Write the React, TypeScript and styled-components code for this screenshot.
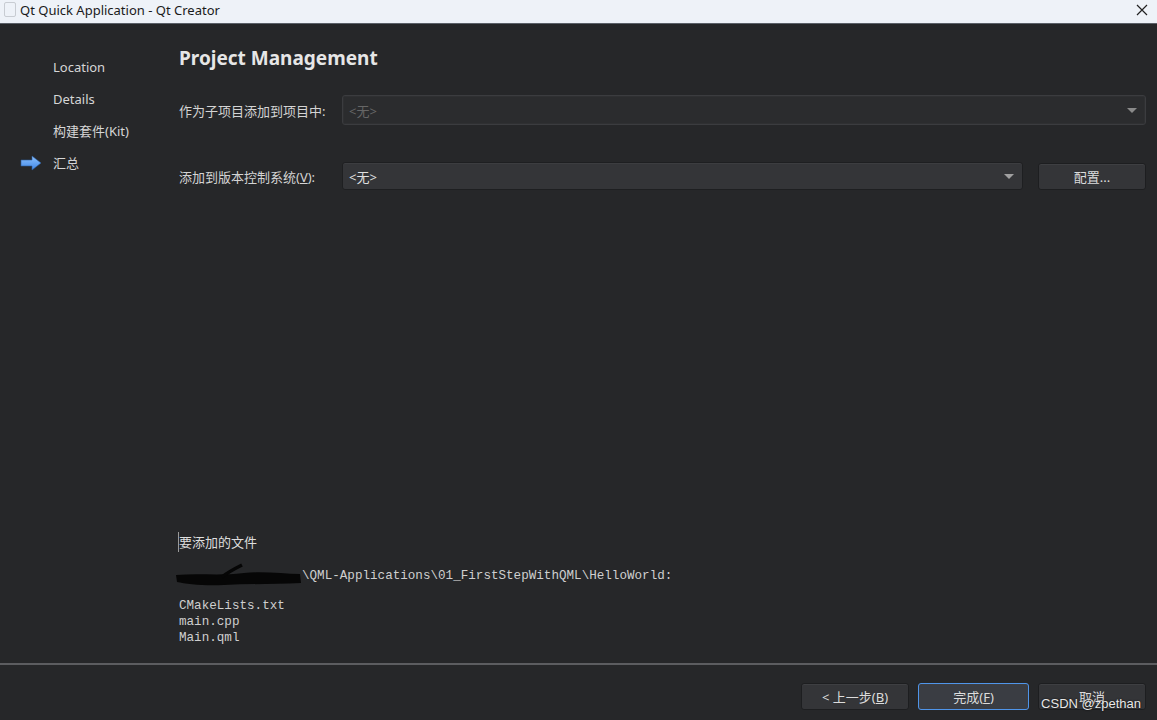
import styled, { createGlobalStyle } from "styled-components";

const GlobalStyle = createGlobalStyle`
  html, body {
    margin: 0;
    padding: 0;
    background: #262729;
  }
  body {
    font-family: "Noto Sans", "Noto Sans CJK SC", sans-serif;
  }
`;

const Window = styled.div`
  width: 1157px;
  height: 720px;
  display: flex;
  flex-direction: column;
  background: #262729;
  color: #d8d8d8;
  overflow: hidden;
`;

const TitleBar = styled.div`
  height: 24px;
  box-sizing: border-box;
  background: #eef2f8;
  border-bottom: 1px solid #5b6068;
  display: flex;
  align-items: center;
  padding: 0 6px 4px 4px;
  color: #1a1a1a;
  font-size: 13px;
`;

const AppIcon = styled.div`
  width: 10px;
  height: 13px;
  border: 1px solid #c8ccd2;
  border-radius: 2px;
  margin-right: 4px;
`;

const TitleText = styled.div`
  flex: 1;
`;

const Close = styled.div`
  width: 18px;
  display: flex;
  justify-content: center;
  svg {
    display: block;
  }
`;

const Body = styled.div`
  flex: 1;
  display: flex;
`;

const Sidebar = styled.div`
  width: 179px;
  padding-top: 33px;
  display: flex;
  flex-direction: column;
  gap: 13px;
`;

const Step = styled.div`
  height: 19px;
  display: flex;
  align-items: center;
  font-size: 13px;
  color: #d6d6d6;
  padding-left: 20px;
`;

const StepMark = styled.div`
  width: 33px;
  display: flex;
  align-items: center;
`;

const Main = styled.div`
  flex: 1;
  padding: 19px 11px 0 0;
  display: flex;
  flex-direction: column;
`;

const Heading = styled.div`
  font-size: 19px;
  font-weight: 700;
  color: #e6e6e6;
  height: 30px;
  line-height: 30px;
  margin-bottom: 22px;
`;

const FormRow = styled.div<{ $gap?: number }>`
  display: flex;
  align-items: center;
  height: 30px;
  margin-bottom: ${(p) => p.$gap ?? 0}px;
`;

const Label = styled.div`
  width: 163px;
  font-size: 13px;
  color: #d4d4d4;
`;

const Combo = styled.div<{ $disabled?: boolean }>`
  flex: 1;
  height: ${(p) => (p.$disabled ? 30 : 28)}px;
  box-sizing: border-box;
  border: 1px solid ${(p) => (p.$disabled ? "#3b3c3f" : "#1e1f21")};
  border-radius: 3px;
  background: ${(p) => (p.$disabled ? "#2b2c2e" : "#343538")};
  display: flex;
  align-items: center;
  padding: 0 8px 0 6px;
  font-size: 13px;
  color: ${(p) => (p.$disabled ? "#666" : "#e0e0e0")};
  box-shadow: ${(p) =>
    p.$disabled ? "inset 0 0 0 1px #2f3032" : "inset 0 1px 0 #3c3d40"};
`;

const ComboText = styled.div`
  flex: 1;
`;

const Caret = styled.div<{ $disabled?: boolean }>`
  width: 0;
  height: 0;
  border-left: 5px solid transparent;
  border-right: 5px solid transparent;
  border-top: 5px solid ${(p) => (p.$disabled ? "#8a8a8a" : "#a0a0a0")};
`;

const Button = styled.div<{ $focus?: boolean; $w?: number }>`
  width: ${(p) => p.$w ?? 108}px;
  height: 27px;
  box-sizing: border-box;
  border: 1px solid ${(p) => (p.$focus ? "#4f95ea" : "#1d1e20")};
  border-radius: 3px;
  background: ${(p) => (p.$focus ? "#3a3d43" : "#343538")};
  box-shadow: inset 0 1px 0 #3e3f42;
  display: flex;
  align-items: center;
  justify-content: center;
  font-size: 13px;
  color: #dcdcdc;
  u {
    text-decoration: underline;
  }
`;

const ButtonGap = styled.div`
  width: 15px;
`;

const Spacer = styled.div`
  flex: 1;
`;

const FilesTitle = styled.div`
  font-size: 13px;
  color: #dedede;
  height: 20px;
  margin-bottom: 16px;
  border-left: 1px solid #9a9a9a;
  margin-left: -1px;
  line-height: 20px;
`;

const Mono = styled.div`
  font-family: "Liberation Mono", "DejaVu Sans Mono", monospace;
  font-size: 12.6px;
  line-height: 16px;
  color: #cfcfcf;
  white-space: pre;
`;

const PathLine = styled(Mono)`
  display: flex;
  align-items: center;
  margin-bottom: 14px;
`;

const Scribble = styled.svg`
  display: block;
  margin-left: -5px;
  margin-top: -6px;
  margin-bottom: -4px;
`;

const FileList = styled(Mono)`
  margin-bottom: 17px;
`;

const Footer = styled.div`
  height: 57px;
  border-top: 2px solid #5c5d60;
  display: flex;
  align-items: center;
  justify-content: flex-end;
  gap: 9px;
  padding: 8px 11px 0 0;
  box-sizing: border-box;
  position: relative;
`;

const Watermark = styled.div`
  position: absolute;
  right: 16px;
  bottom: 9px;
  font-family: "Liberation Sans", Arial, sans-serif;
  font-size: 13px;
  color: #e8e8e8;
  text-shadow: 0 0 2px #000;
`;

export default function App() {
  return (
    <>
      <GlobalStyle />
      <Window>
        <TitleBar>
          <AppIcon />
          <TitleText>Qt Quick Application - Qt Creator</TitleText>
          <Close>
            <svg width="12" height="12" viewBox="0 0 12 12">
              <path d="M1 1 L11 11 M11 1 L1 11" stroke="#222" strokeWidth="1.2" />
            </svg>
          </Close>
        </TitleBar>
        <Body>
          <Sidebar>
            <Step>
              <StepMark />
              Location
            </Step>
            <Step>
              <StepMark />
              Details
            </Step>
            <Step>
              <StepMark />
              构建套件(Kit)
            </Step>
            <Step>
              <StepMark>
                <svg width="22" height="16" viewBox="0 0 22 16">
                  <defs>
                    <linearGradient id="ar" x1="0" y1="0" x2="0" y2="1">
                      <stop offset="0" stopColor="#8cc2ff" />
                      <stop offset="1" stopColor="#3f86e6" />
                    </linearGradient>
                  </defs>
                  <path
                    d="M1 5 H12 V1 L21 8 L12 15 V11 H1 Z"
                    fill="url(#ar)"
                    stroke="#2d5c9c"
                    strokeWidth="0.6"
                  />
                </svg>
              </StepMark>
              汇总
            </Step>
          </Sidebar>
          <Main>
            <Heading>Project Management</Heading>
            <FormRow $gap={36}>
              <Label>作为子项目添加到项目中:</Label>
              <Combo $disabled>
                <ComboText>&lt;无&gt;</ComboText>
                <Caret $disabled />
              </Combo>
            </FormRow>
            <FormRow>
              <Label>
                添加到版本控制系统(<u>V</u>):
              </Label>
              <Combo>
                <ComboText>&lt;无&gt;</ComboText>
                <Caret />
              </Combo>
              <ButtonGap />
              <Button>配置...</Button>
            </FormRow>
            <Spacer />
            <FilesTitle>要添加的文件</FilesTitle>
            <PathLine>
              <Scribble width="128" height="26" viewBox="0 0 128 26">
                <path
                  d="M2 13 C25 11 45 14 70 11 C90 9 110 12 126 12 L127 21 C100 22 75 22 50 23 C30 24 12 22 3 20 Z"
                  fill="#060606"
                />
                <path d="M48 15 C54 10 60 7 68 3" stroke="#060606" strokeWidth="3.5" fill="none" />
              </Scribble>
              {"\\QML-Applications\\01_FirstStepWithQML\\HelloWorld:"}
            </PathLine>
            <FileList>{"CMakeLists.txt\nmain.cpp\nMain.qml"}</FileList>
          </Main>
        </Body>
        <Footer>
          <Button>
            &lt; 上一步(<u>B</u>)
          </Button>
          <Button $focus $w={111}>
            完成(<u>F</u>)
          </Button>
          <Button>取消</Button>
          <Watermark>CSDN @zpethan</Watermark>
        </Footer>
      </Window>
    </>
  );
}
